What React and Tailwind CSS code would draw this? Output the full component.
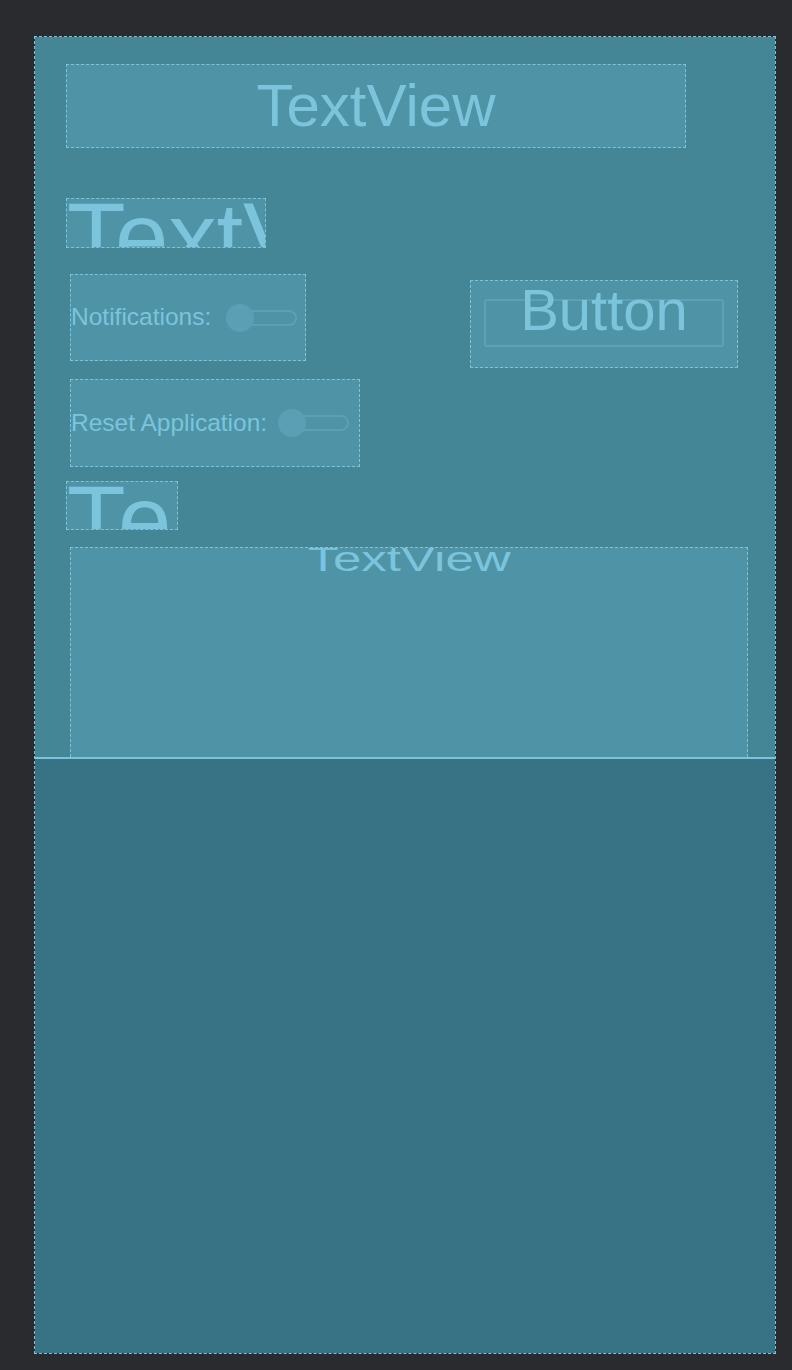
const Switch = () => (
  <div className="relative w-[71px] h-[28px] shrink-0">
    <div className="absolute left-[14px] right-0 top-[6px] h-[16px] rounded-full border-2 border-[#5ba0b4]" />
    <div className="absolute left-0 top-0 w-[28px] h-[28px] rounded-full bg-[#5a9fb4]" />
  </div>
);

const box = 'border border-dashed border-[#7cc4dc] bg-[#4f93a6]';

export default function App() {
  return (
    <div
      className="w-[792px] h-[1370px] bg-[#2a2b2f] pt-[36px] pl-[34px] text-[#7cc4db]"
      style={{ fontFamily: '"Liberation Sans", Arial, sans-serif' }}
    >
      <div className="w-[742px] h-[1318px] border border-dashed border-[#7cc4dc] flex flex-col">
        <div className="h-[722px] bg-[#448696] border-b-2 border-[#7cc4dc] flex flex-col">
          {/* title */}
          <div className={`${box} ml-[31px] mt-[27px] w-[620px] h-[84px] flex items-center justify-center`}>
            <span className="text-[60px] leading-none">TextView</span>
          </div>

          {/* clipped large label */}
          <div className={`${box} ml-[31px] mt-[50px] w-[200px] h-[50px] overflow-hidden`}>
            <div className="text-[96px] leading-none -mt-[10px] whitespace-nowrap">TextView</div>
          </div>

          <div className="flex items-start mt-[26px]">
            <div className={`${box} ml-[35px] w-[236px] h-[87px] flex items-center`}>
              <span className="text-[24.5px] leading-none">Notifications:</span>
              <div className="ml-[15px]">
                <Switch />
              </div>
            </div>
            <div className={`${box} ml-[164px] mt-[6px] w-[268px] h-[88px] relative flex items-center justify-center`}>
              <div className="w-[240px] h-[48px] -mt-[2px] rounded-[3px] border-2 border-[#5ca1b5]" />
              <span className="absolute left-0 right-0 top-0 text-center text-[58px] leading-none">Button</span>
            </div>
          </div>

          <div className={`${box} ml-[35px] mt-[11px] w-[290px] h-[88px] flex items-center`}>
            <span className="text-[24.5px] leading-none">Reset Application:</span>
            <div className="ml-[11px]">
              <Switch />
            </div>
          </div>

          <div className={`${box} ml-[31px] mt-[14px] w-[112px] h-[49px] overflow-hidden`}>
            <div className="text-[96px] leading-none -mt-[10px] tracking-[3px] whitespace-nowrap">TextView</div>
          </div>

          <div className={`${box} ml-[35px] mt-[17px] w-[678px] flex-1 border-b-0 overflow-hidden`}>
            <div className="text-[51px] leading-none -mt-[22px] text-center whitespace-nowrap scale-y-[0.7] origin-bottom">
              TextView
            </div>
          </div>
        </div>
        <div className="flex-1 bg-[#377385]" />
      </div>
    </div>
  );
}
